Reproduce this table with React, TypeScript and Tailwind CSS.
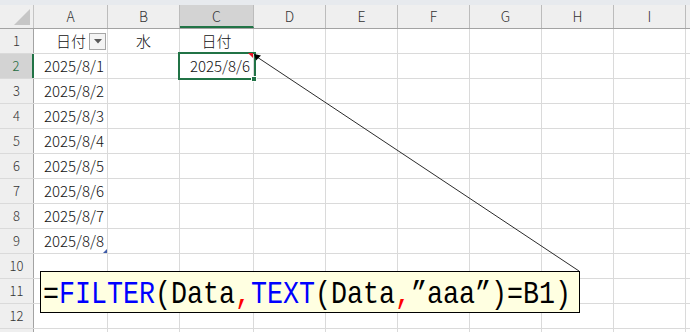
import React from "react";

const cols = [
  { name: "A", w: "w-[74px]" },
  { name: "B", w: "w-[72px]" },
  { name: "C", w: "w-[74px]" },
  { name: "D", w: "w-[72px]" },
  { name: "E", w: "w-[72px]" },
  { name: "F", w: "w-[72px]" },
  { name: "G", w: "w-[72px]" },
  { name: "H", w: "w-[72px]" },
  { name: "I", w: "w-[72px]" },
];

const dates = ["2025/8/1", "2025/8/2", "2025/8/3", "2025/8/4", "2025/8/5", "2025/8/6", "2025/8/7", "2025/8/8"];

function CellText({ row, col }: { row: number; col: number }) {
  if (row === 1 && col === 0) {
    return (
      <div className="flex h-full items-center justify-end gap-[3px] pr-[1px]">
        <span className="text-[15px]">日付</span>
        <div className="flex h-[17px] w-[17px] items-center justify-center border border-[#a6a6a6] bg-[#f4f4f4]">
          <svg width="8" height="5" viewBox="0 0 8 5">
            <path d="M0 0 L8 0 L4 4.5 Z" fill="#595959" />
          </svg>
        </div>
      </div>
    );
  }
  if (row === 1 && col === 1) {
    return <div className="flex h-full items-center justify-center text-[15px]">水</div>;
  }
  if (row === 1 && col === 2) {
    return <div className="flex h-full items-center justify-center text-[15px]">日付</div>;
  }
  if (row >= 2 && row <= 9 && col === 0) {
    return (
      <div className="relative flex h-full items-center justify-end pr-[3px] text-[15px]">
        {dates[row - 2]}
        {row === 9 && (
          <svg className="absolute bottom-0 right-0" width="4" height="4" viewBox="0 0 4 4">
            <path d="M4 0 L4 4 L0 4 Z" fill="#3d5aa8" />
          </svg>
        )}
      </div>
    );
  }
  if (row === 2 && col === 2) {
    return (
      <div className="flex h-full items-center justify-end pr-[3px] text-[15px]">2025/8/6</div>
    );
  }
  return null;
}

export default function App() {
  const rows = Array.from({ length: 13 }, (_, i) => i + 1);

  return (
    <div className="relative h-[332px] w-[690px] overflow-hidden bg-white font-['Noto_Sans_CJK_JP',sans-serif] font-light text-[#111]">
      {/* ribbon strip */}
      <div className="h-[5px] bg-[#e7eaee]" />

      {/* column headers */}
      <div className="flex h-[24px] border-b border-[#a3a3a3] bg-[#efefef]">
        <div className="relative w-[34px] shrink-0 border-r border-[#c4c4c4]">
          <svg className="absolute left-[14px] top-[4px]" width="16" height="16" viewBox="0 0 16 16">
            <path d="M16 0 L16 16 L0 16 Z" fill="#c6c6c6" />
          </svg>
        </div>
        {cols.map((c) => (
          <div
            key={c.name}
            className={`${c.w} flex shrink-0 items-center justify-center border-r border-[#bcbcbc] text-[14px] text-[#333] ${
              c.name === "C" ? "border-b-2 border-b-[#217346] bg-[#d3d3d3] pt-[2px] text-[#1e5c3a]" : ""
            }`}
          >
            {c.name}
          </div>
        ))}
        <div className="flex-1" />
      </div>

      {/* rows */}
      {rows.map((r) => (
        <div key={r} className="flex h-[25px] border-b border-[#dadada]">
          <div
            className={`flex w-[34px] shrink-0 items-center justify-center text-[13px] ${
              r === 2
                ? "border-r-2 border-r-[#217346] bg-[#d3d3d3] text-[#1e6b3e]"
                : "border-r border-r-[#a3a3a3] bg-[#efefef] text-[#333]"
            }`}
          >
            {r < 13 ? r : ""}
          </div>
          {cols.map((c, ci) => (
            <div key={c.name} className={`${c.w} shrink-0 border-r border-[#dadada]`}>
              <CellText row={r} col={ci} />
            </div>
          ))}
          <div className="flex-1" />
        </div>
      ))}

      {/* active cell C2 */}
      <div className="absolute left-[178px] top-[52px] h-[28px] w-[78px] border-2 border-[#217346]" />
      <div className="absolute left-[251px] top-[76px] h-[6px] w-[6px] border border-white bg-[#217346]" />
      <svg className="absolute left-[248px] top-[53px]" width="5" height="5" viewBox="0 0 5 5">
        <path d="M0 0 L5 0 L5 5 Z" fill="#e81123" />
      </svg>

      {/* comment leader line */}
      <svg className="pointer-events-none absolute left-0 top-0" width="690" height="332" viewBox="0 0 690 332">
        <line x1="257" y1="57" x2="579" y2="271" stroke="#2b2b2b" strokeWidth="1" />
        <path d="M254 54 L261 55.5 L256 60.5 Z" fill="#000" />
      </svg>

      {/* comment box */}
      <div className="absolute left-[40px] top-[271px] flex h-[42px] w-[540px] items-center overflow-hidden border border-black bg-[#ffffe1] pl-[2px] pt-[6px]">
        <div className="origin-left scale-x-[0.833] whitespace-nowrap font-['Liberation_Mono',monospace] text-[32px] font-normal leading-none text-black">
          =<span className="text-[#0000ff]">FILTER</span>(Data<span className="text-[#ff0000]">,</span>
          <span className="text-[#0000ff]">TEXT</span>(Data<span className="text-[#ff0000]">,</span>”aaa”)=B1)
        </div>
      </div>
    </div>
  );
}
